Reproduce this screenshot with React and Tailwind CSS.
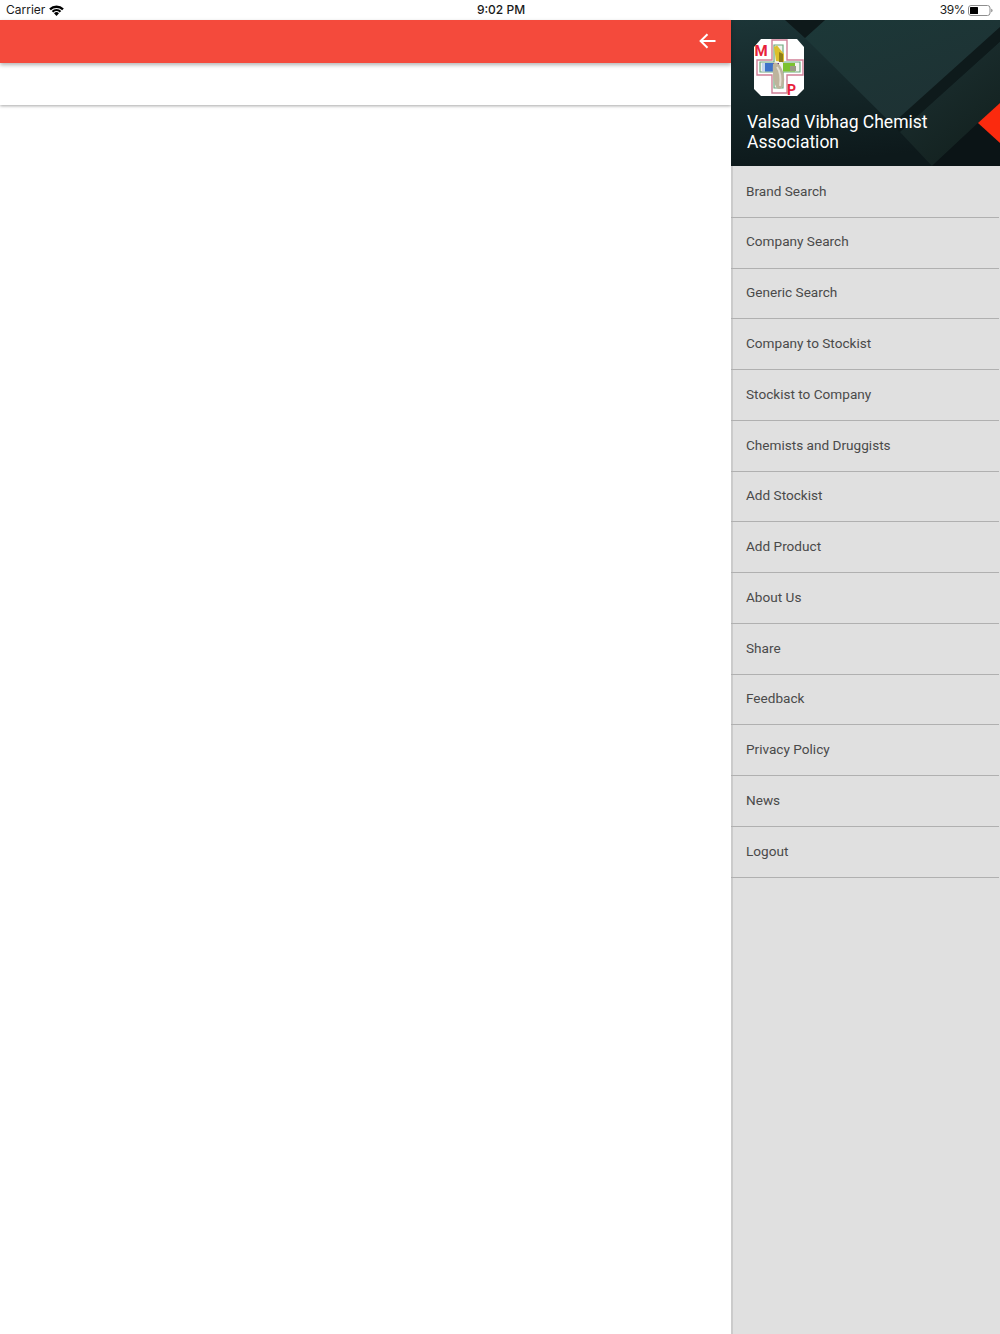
import React from 'react';

const menuItems = [
    'Brand Search',
    'Company Search',
    'Generic Search',
    'Company to Stockist',
    'Stockist to Company',
    'Chemists and Druggists',
    'Add Stockist',
    'Add Product',
    'About Us',
    'Share',
    'Feedback',
    'Privacy Policy',
    'News',
    'Logout',
];

const WifiIcon = () => (
    <svg width="15" height="11" viewBox="0 0 15 11" className="ml-[4px]">
        <path d="M0.2 3.6 A10.4 10.4 0 0 1 14.8 3.6 L13.2 5.2 A8.2 8.2 0 0 0 1.8 5.2 Z" fill="#000" />
        <path d="M2.7 6 A6.9 6.9 0 0 1 12.3 6 L10.7 7.6 A4.7 4.7 0 0 0 4.3 7.6 Z" fill="#000" />
        <path d="M5 8.3 A3.5 3.5 0 0 1 10 8.3 L7.5 10.9 Z" fill="#000" />
    </svg>
);

const BatteryIcon = () => (
    <svg width="25" height="11" viewBox="0 0 25 11" className="ml-[3px]">
        <rect x="0.5" y="0.5" width="21.5" height="10" rx="2.5" fill="none" stroke="#8e8e8e" />
        <rect x="2" y="2" width="8" height="7" rx="0.5" fill="#000" />
        <path d="M23.2 3.8 C24.2 4 24.6 4.7 24.6 5.5 C24.6 6.3 24.2 7 23.2 7.2 Z" fill="#8e8e8e" />
    </svg>
);

const BackArrow = () => (
    <svg width="17" height="16" viewBox="0 0 17 16">
        <path d="M16.5 8 H2 M8.5 1.2 L1.6 8 L8.5 14.8" fill="none" stroke="#fff" strokeWidth="2" />
    </svg>
);

// the dark geometric artwork behind the drawer title
const HeaderArt = () => (
    <svg className="absolute inset-0 w-full h-full" viewBox="0 0 269 146" preserveAspectRatio="none">
        <defs>
            <linearGradient id="base" x1="0" y1="0" x2="0.2" y2="1">
                <stop offset="0" stopColor="#1c3537" />
                <stop offset="1" stopColor="#0d191b" />
            </linearGradient>
            <linearGradient id="band" x1="0" y1="0" x2="0.6" y2="1">
                <stop offset="0" stopColor="#1c3838" />
                <stop offset="1" stopColor="#1e3133" />
            </linearGradient>
            <linearGradient id="lower" x1="0" y1="0" x2="0.6" y2="1">
                <stop offset="0" stopColor="#1d3234" />
                <stop offset="1" stopColor="#13211f" />
            </linearGradient>
        </defs>
        <rect width="269" height="146" fill="url(#base)" />
        <path d="M74 18 L94 0 L269 0 L269 7 L160 107 L164 107 Z" fill="url(#band)" />
        <path d="M54 0 L94 0 L74 18 Z" fill="#0e191a" />
        <path d="M269 7 L269 22 L169 112 L160 105 Z" fill="#0e1a1b" />
        <path d="M169 112 L269 22 L269 83 L247 103 L201 146 Z" fill="url(#lower)" />
        <path d="M201 146 L247 103 L269 123 L269 146 Z" fill="#0b1416" />
        <path d="M247 103 L269 83 L269 123 Z" fill="#fb2a0e" />
    </svg>
);

const Logo = () => (
    <svg width="50" height="58" viewBox="0 0 50 58" className="block">
        <path d="M7 0 H43 L50 8 V50 L43 57 H7 L0 50 V8 Z" fill="#fff" />
        <path d="M18 1 H33 V21 H49 V36 H33 V54 H18 V36 H3 V21 H18 Z" fill="#fff" stroke="#cf7f96" strokeWidth="1.4" />
        <path d="M20 6 H29 V23 H46 V33 H29 V49 H20 V33 H6 V23 H20 Z" fill="#f3f3ee" stroke="#6fa87f" strokeWidth="1.2" />
        <rect x="8" y="24" width="3" height="8.5" fill="#c2d6ee" />
        <rect x="11" y="24" width="8" height="8.5" fill="#3e72c8" />
        <rect x="19" y="24" width="6" height="8.5" fill="#5b2f91" />
        <rect x="29" y="24" width="12" height="8.5" fill="#7cc22e" />
        <rect x="36" y="27" width="6" height="5" fill="#9a9a86" />
        <path d="M20 8 L23 6.5 L30 15 L30 23 L22 22 Z" fill="#dcc02c" />
        <path d="M25 13 L29 15 L29 23 L25 23 Z" fill="#8f7d1a" />
        <path d="M19 25 C23 21 29 28 30 38 C31 45 28 50 25 50 C21 50 18 38 19 25 Z" fill="#bdb49d" />
        <path d="M23 28 C26 32 27 40 26 47" fill="none" stroke="#e4dfd2" strokeWidth="2" />
        <text x="0.5" y="17" fontFamily="Roboto, sans-serif" fontWeight="700" fontSize="15" fill="#e8213a">M</text>
        <text x="33" y="56" fontFamily="Roboto, sans-serif" fontWeight="700" fontSize="14" fill="#e8213a">P</text>
    </svg>
);

const App = () => {
    return (
        <div className="w-[1000px] h-[1334px] flex flex-col bg-white overflow-hidden font-['Roboto',sans-serif]">
            {/* status bar */}
            <div className="h-5 shrink-0 grid grid-cols-3 items-center pl-[6px] pr-[7px] font-['Inter',sans-serif] text-[12px] text-[#1a1a1a]">
                <div className="flex items-center">
                    <span>Carrier</span>
                    <WifiIcon />
                </div>
                <div className="text-center font-medium pl-[3px]">9:02 PM</div>
                <div className="flex items-center justify-end">
                    <span className="tracking-[-0.5px]">39%</span>
                    <BatteryIcon />
                </div>
            </div>

            <div className="flex-1 flex min-h-0">
                {/* main area */}
                <div className="w-[731px] shrink-0 flex flex-col">
                    <div className="relative z-10 h-[43px] pb-[2px] bg-[#f44a3c] flex items-center justify-end pr-[15px] shadow-[0_2px_4px_rgba(0,0,0,0.3)]">
                        <BackArrow />
                    </div>
                    <div className="h-[42px] bg-white shadow-[0_1px_3px_rgba(0,0,0,0.35)]" />
                </div>

                {/* drawer */}
                <div className="flex-1 flex flex-col bg-[#e0e0e0] shadow-[inset_2px_0_0_#cbcbcb]">
                    <div className="relative h-[146px] shrink-0 overflow-hidden mb-[1px]">
                        <HeaderArt />
                        <div className="relative pt-[19px] pl-[23px]">
                            <Logo />
                        </div>
                        <div className="relative mt-[16px] pl-[16px] text-white text-[17.5px] leading-[19.5px]">
                            Valsad Vibhag Chemist
                            <br />
                            Association
                        </div>
                    </div>
                    {menuItems.map((item) => (
                        <div
                            key={item}
                            className="h-[50.77px] shrink-0 flex items-center pl-[15px] pb-[2px] mr-[1px] border-b border-[#b0b0b0] text-[13.6px] text-[#4a4a4a]"
                        >
                            {item}
                        </div>
                    ))}
                </div>
            </div>
        </div>
    );
};

export default App;
